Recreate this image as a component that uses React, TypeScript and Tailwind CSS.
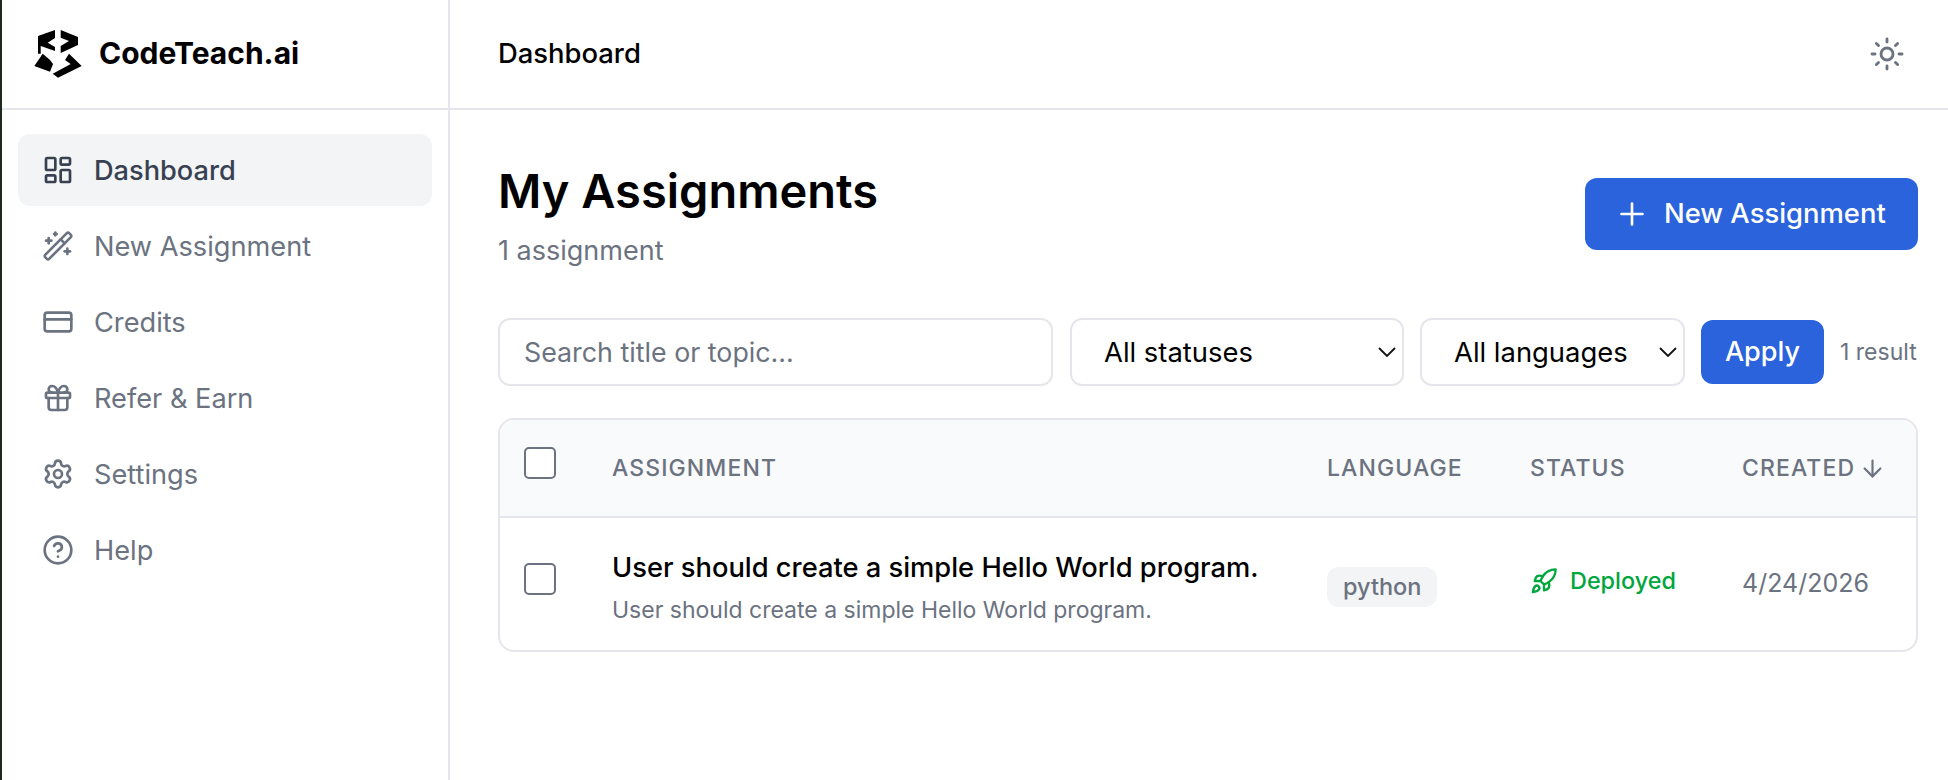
import {
  ArrowDown,
  CircleHelp,
  CreditCard,
  Gift,
  LayoutDashboard,
  Plus,
  Rocket,
  Settings,
  Sun,
  WandSparkles,
} from "lucide-react";

const nav = [
  { label: "Dashboard", icon: LayoutDashboard, active: true },
  { label: "New Assignment", icon: WandSparkles },
  { label: "Credits", icon: CreditCard },
  { label: "Refer & Earn", icon: Gift },
  { label: "Settings", icon: Settings },
  { label: "Help", icon: CircleHelp },
];

function Logo() {
  return (
    <svg viewBox="34 29 48 48" className="h-12 w-12 shrink-0" fill="#000">
      <path d="M38 35l17-6v8l-7.300 4.700L55 46v4l-14.300-5v7.700H38z" />
      <path d="M60.700 29L78 36v8l-17.300 8v-7L69 40l-8.300-3.300z" />
      <path d="M42.700 52.700L50 59l3 4-3 7.700L34.300 65z" />
      <path d="M69 52.700L81.700 65 58 76.700l-5.300-4L70.700 63 65 59z" />
    </svg>
  );
}

function Select({ label, className }: { label: string; className: string }) {
  return (
    <div
      className={`flex h-[68px] items-center justify-between rounded-xl border-2 border-[#e5e5eb] bg-white pl-[32px] pr-[6px] text-[27.4px] text-black ${className}`}
    >
      <span className="pt-[2px]">{label}</span>
      <svg viewBox="0 0 18 10" className="h-[10px] w-[18px]" fill="none" stroke="#111" strokeWidth="1.8">
        <path d="M1 1l8 8 8-8" />
      </svg>
    </div>
  );
}

function Checkbox() {
  return <div className="h-[32px] w-[32px] rounded-[5px] border-2 border-[#6b7280] bg-white" />;
}

export default function App() {
  return (
    <div className="flex h-[780px] w-[1948px] overflow-hidden bg-white font-['Inter',sans-serif]">
      <div className="w-[2px] shrink-0 bg-[#1b2a1a]" />
      <aside className="w-[448px] shrink-0 border-r-2 border-[#e5e5eb]">
        <div className="flex h-[110px] items-center gap-[17px] border-b-2 border-[#e5e5eb] pl-[32px]">
          <Logo />
          <span className="pb-[2px] text-[30px] font-bold text-black">CodeTeach.ai</span>
        </div>
        <nav className="flex flex-col gap-1 px-4 pt-[24px]">
          {nav.map(({ label, icon: Icon, active }) => (
            <div
              key={label}
              className={`flex h-[72px] items-center gap-[20px] rounded-xl pl-6 text-[27.2px] ${
                active ? "bg-[#f3f4f6] font-medium text-[#374151]" : "text-[#6b7280]"
              }`}
            >
              <Icon className="h-8 w-8" strokeWidth={2} />
              <span className="pt-[2px]">{label}</span>
            </div>
          ))}
        </nav>
      </aside>

      <div className="min-w-0 flex-1">
        <header className="flex h-[110px] items-center justify-between border-b-2 border-[#e5e5eb] pl-[48px] pr-[37px]">
          <span className="text-[27.4px] font-medium text-black">Dashboard</span>
          <button className="flex h-12 w-12 items-center justify-center text-[#6b7280]">
            <Sun className="h-9 w-9" strokeWidth={1.9} />
          </button>
        </header>

        <main className="pl-[48px] pr-[30px] pt-[48px]">
          <div className="flex items-start justify-between">
            <div>
              <h1 className="text-[47px] font-semibold leading-[66px] text-black">My Assignments</h1>
              <p className="mt-[9px] text-[27px] leading-9 text-[#6b7280]">1 assignment</p>
            </div>
            <button className="mt-[20px] flex h-[72px] w-[333px] items-center gap-[14px] rounded-xl bg-[#2a63db] pl-[29px] text-[27.4px] font-medium text-white">
              <Plus className="h-9 w-9" strokeWidth={1.75} />
              New Assignment
            </button>
          </div>

          <div className="mt-[49px] flex items-center">
            <div className="flex h-[68px] w-[555px] items-center rounded-xl border-2 border-[#e5e5eb] px-6 text-[26.8px] text-[#6b7280]">
              Search title or topic...
            </div>
            <Select label="All statuses" className="ml-[17px] w-[334px]" />
            <Select label="All languages" className="ml-4 w-[265px]" />
            <button className="ml-4 h-[64px] w-[123px] rounded-xl bg-[#2a63db] text-[27px] font-medium text-white">
              Apply
            </button>
            <span className="ml-4 text-[23px] text-[#6b7280]">1 result</span>
          </div>

          <div className="mt-[32px] overflow-hidden rounded-2xl border-2 border-[#e5e5eb]">
            <div className="grid h-[98px] grid-cols-[112px_715px_203px_212px_1fr] items-center border-b-2 border-[#e5e5eb] bg-[#f9fafb] text-[23px] font-medium tracking-[1.1px] text-[#6b7280]">
              <div className="pl-6 pb-[10px]">
                <Checkbox />
              </div>
              <div>ASSIGNMENT</div>
              <div>LANGUAGE</div>
              <div>STATUS</div>
              <div className="flex items-center gap-1">
                CREATED <ArrowDown className="h-[27px] w-[27px]" strokeWidth={1.9} />
              </div>
            </div>
            <div className="grid h-[132px] grid-cols-[112px_715px_203px_212px_1fr] items-center">
              <div className="pl-6 pb-[11px]">
                <Checkbox />
              </div>
              <div className="pt-[8px]">
                <div className="text-[27.3px] font-medium leading-9 text-black">
                  User should create a simple Hello World program.
                </div>
                <div className="mt-[8px] text-[23px] leading-8 text-[#6b7280]">
                  User should create a simple Hello World program.
                </div>
              </div>
              <div className="pt-[6px]">
                <span className="inline-block h-10 rounded-xl bg-[#f3f4f6] px-4 text-[23.5px] font-medium leading-10 text-[#6b7280]">
                  python
                </span>
              </div>
              <div className="flex items-center gap-[12px] pb-[6px] text-[23.4px] font-medium text-[#00a63e]">
                <Rocket className="h-7 w-7" strokeWidth={2} />
                Deployed
              </div>
              <div className="text-[25px] text-[#6b7280]">4/24/2026</div>
            </div>
          </div>
        </main>
      </div>
    </div>
  );
}
